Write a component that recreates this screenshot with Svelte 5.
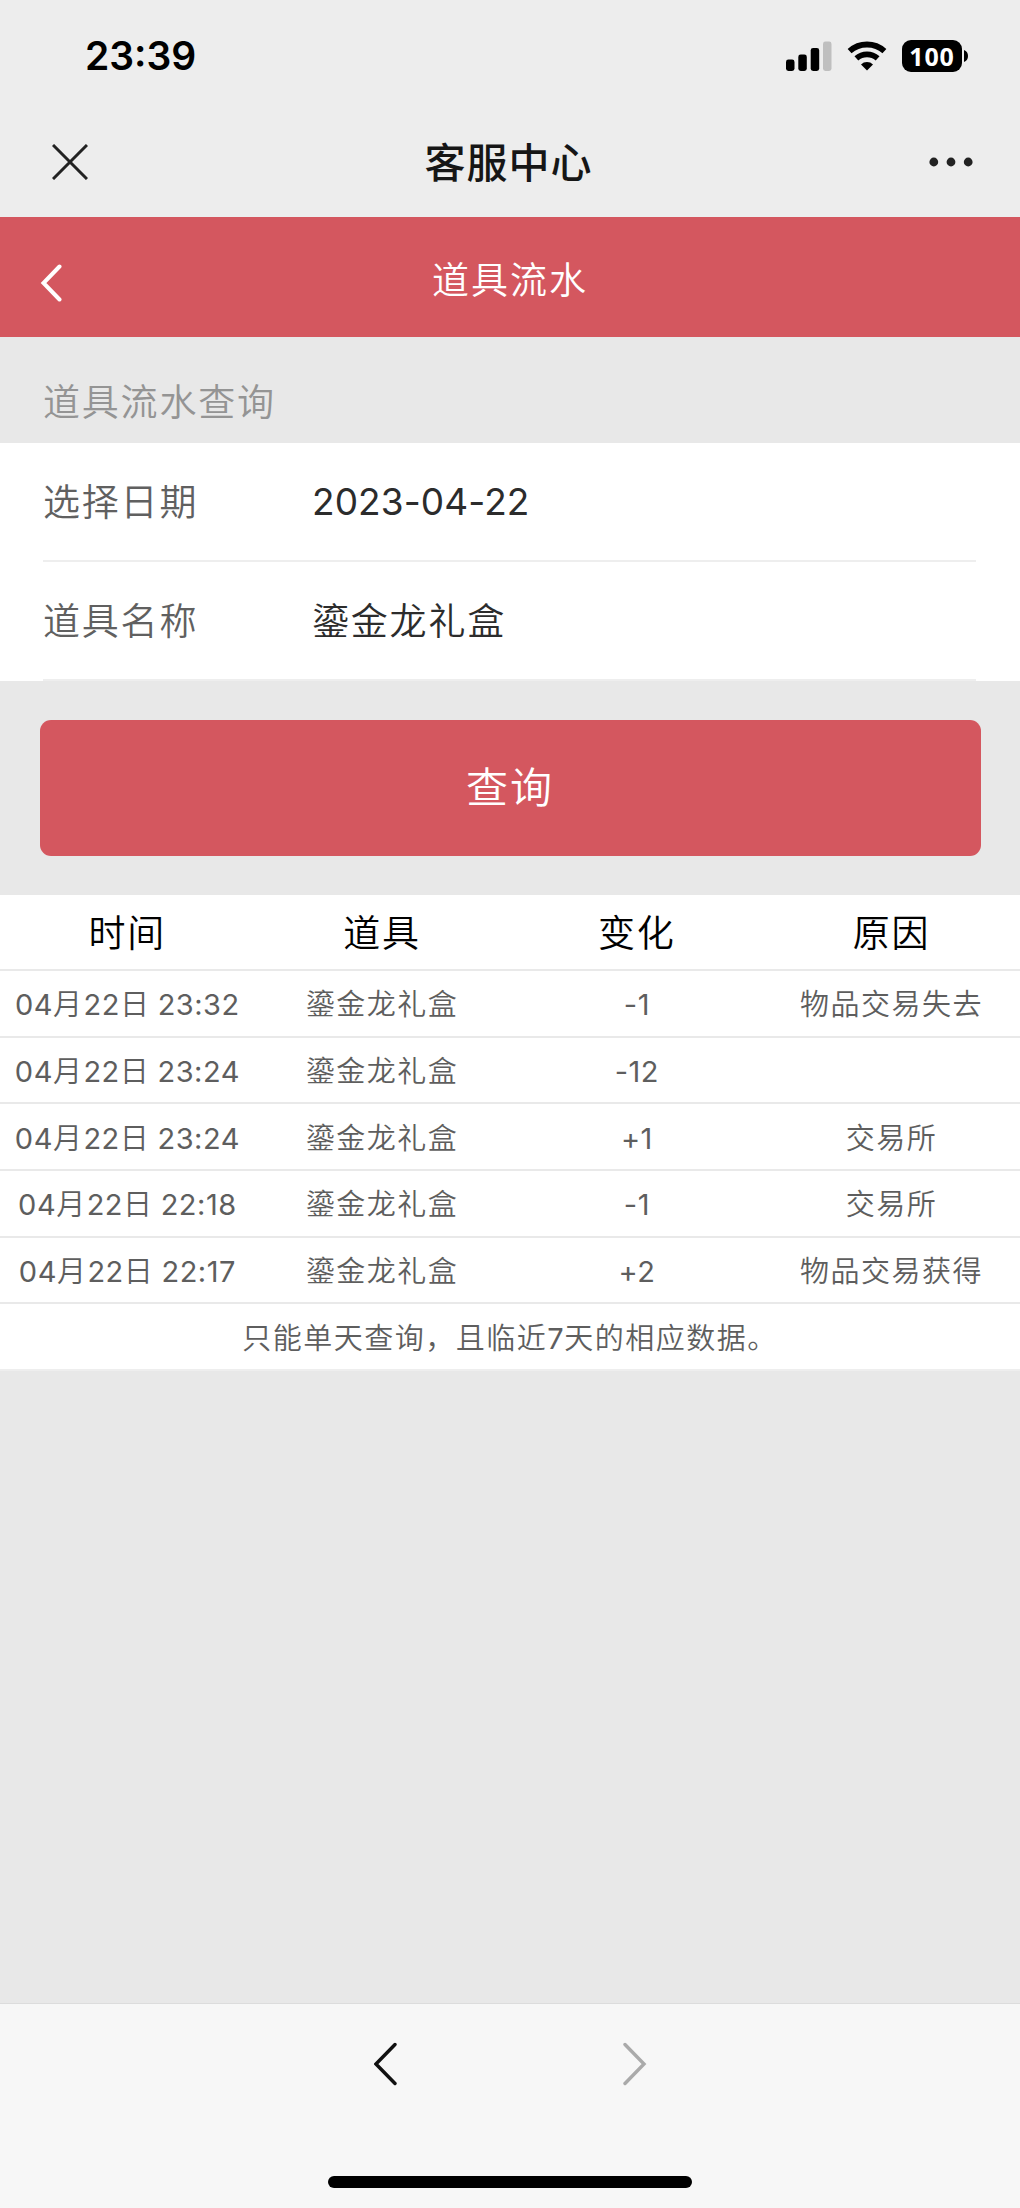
<script>
  const columns = ['时间', '道具', '变化', '原因'];
  const records = [
    ['04月22日 23:32', '鎏金龙礼盒', '-1', '物品交易失去'],
    ['04月22日 23:24', '鎏金龙礼盒', '-12', ''],
    ['04月22日 23:24', '鎏金龙礼盒', '+1', '交易所'],
    ['04月22日 22:18', '鎏金龙礼盒', '-1', '交易所'],
    ['04月22日 22:17', '鎏金龙礼盒', '+2', '物品交易获得']
  ];
  const fields = [
    { label: '选择日期', value: '2023-04-22', numeric: true },
    { label: '道具名称', value: '鎏金龙礼盒', numeric: false }
  ];

  // Odd entries of the result are the numeric runs.
  const runs = (text) => text.split(/([\d:+\-\s]+)/);
</script>

<div class="screen">
  <header class="status">
    <span class="clock">23:39</span>
    <div class="indicators">
      <svg class="signal" width="46" height="30" viewBox="0 0 46 30">
        <rect x="0" y="18.5" width="8.5" height="11.5" rx="2.4" />
        <rect x="12.3" y="13.5" width="8.5" height="16.5" rx="2.4" />
        <rect x="24.7" y="7" width="8.5" height="23" rx="2.4" />
        <rect class="dim" x="37" y="0.5" width="8.5" height="29.5" rx="2.4" />
      </svg>
      <svg class="wifi" width="40" height="30" viewBox="0 0 40 30">
        <path class="arc" d="M2.6 10.2A26 26 0 0 1 37.4 10.2" />
        <path class="arc" d="M9.4 17.4A16 16 0 0 1 30.6 17.4" />
        <path d="M20 29.6L14 23.4A9 9 0 0 1 26 23.4Z" />
      </svg>
      <div class="battery"><span class="charge">100</span></div>
      <svg class="cap" width="4" height="12" viewBox="0 0 4 12"><path d="M0 0Q4 1.5 4 6T0 12Z" /></svg>
    </div>
  </header>

  <nav class="titlebar">
    <svg width="36" height="36" viewBox="0 0 36 36"><path class="close" d="M1 1L35 35M35 1L1 35" /></svg>
    <h1>客服中心</h1>
    <svg class="more" width="44" height="10" viewBox="0 0 44 10">
      <circle cx="4.8" cy="5" r="4.4" /><circle cx="22" cy="5" r="4.4" /><circle cx="39.2" cy="5" r="4.4" />
    </svg>
  </nav>

  <div class="pagebar">
    <svg width="22" height="38" viewBox="0 0 22 38"><path class="back" d="M19.5 2.5L3.5 19L19.5 35.5" /></svg>
    <h2>道具流水</h2>
  </div>

  <h3>道具流水查询</h3>
  <section class="form">
    {#each fields as field}
      <div class="field">
        <span class="label">{field.label}</span>
        <span class="value" class:numeric={field.numeric}>{field.value}</span>
      </div>
    {/each}
  </section>

  <button>查询</button>

  <section class="table">
    <div class="row head">
      {#each columns as column}<span>{column}</span>{/each}
    </div>
    {#each records as record}
      <div class="row">
        {#each record as cell}
          <span>{#each runs(cell) as run, i}{#if i % 2}<span class="digits">{run}</span>{:else}{run}{/if}{/each}</span>
        {/each}
      </div>
    {/each}
    <p>只能单天查询，且临近<span class="digits">7</span>天的相应数据。</p>
  </section>

  <footer>
    <div class="pager">
      <svg width="24" height="44" viewBox="0 0 24 44"><path class="prev" d="M21 2.5L2 22L21 41.5" /></svg>
      <svg width="24" height="44" viewBox="0 0 24 44"><path class="next" d="M2 2.5L21 22L2 41.5" /></svg>
    </div>
    <div class="home"></div>
  </footer>
</div>

<style>
  :global(body) { background: #e8e8e8; }
  * { box-sizing: border-box; }
  .screen {
    width: 1020px;
    height: 2208px;
    display: flex;
    flex-direction: column;
    overflow: hidden;
    background: #e8e8e8;
    font-family: Inter, "Noto Sans CJK SC", sans-serif;
    font-weight: 350;
  }
  svg { display: block; }
  h1, h2, h3, p { margin: 0; }

  .status {
    height: 112px;
    flex: none;
    background: #ededed;
    display: flex;
    justify-content: space-between;
    padding: 0 52px 0 85px;
  }
  .clock { font-size: 39px; font-weight: 600; line-height: 48px; padding-top: 32px; }
  .indicators { display: flex; align-items: center; height: 111px; }
  .signal .dim { fill: #bfbfbf; }
  .wifi { margin-left: 15px; }
  .arc { fill: none; stroke: #000; stroke-width: 5.8; }
  .battery {
    width: 60px;
    height: 32px;
    margin-left: 15px;
    border-radius: 9px;
    background: #000;
    display: flex;
    align-items: center;
    justify-content: center;
  }
  .charge {
    color: #fff;
    font-family: "Noto Sans", "Open Sans", sans-serif;
    font-size: 25px;
    font-weight: 700;
    letter-spacing: 0.8px;
    line-height: 32px;
  }
  .cap { margin-left: 2px; }

  .titlebar {
    height: 105px;
    flex: none;
    background: #ededed;
    display: grid;
    grid-template-columns: 44px 1fr 44px;
    align-items: center;
    padding: 0 47px 5px 52px;
  }
  .close { stroke: #222; stroke-width: 3; }
  h1 {
    padding: 2px 8px 0 0;
    font-size: 41px;
    font-weight: 500;
    letter-spacing: 1px;
    line-height: 60px;
    text-align: center;
    color: #161616;
  }
  .more { fill: #222; }

  .pagebar {
    height: 120px;
    flex: none;
    background: #d4575f;
    display: grid;
    grid-template-columns: 60px 1fr 60px;
    align-items: center;
    padding: 0 40px;
    color: #fff;
  }
  .pagebar svg { margin-top: 12px; }
  .back { fill: none; stroke: #fff; stroke-width: 4; stroke-linecap: round; }
  h2 {
    padding-top: 7px;
    font-size: 37px;
    font-weight: 350;
    letter-spacing: 2px;
    line-height: 56px;
    text-align: center;
  }

  h3 {
    flex: none;
    height: 106px;
    padding: 38px 43px 0;
    font-size: 37px;
    font-weight: 350;
    letter-spacing: 1.8px;
    line-height: 56px;
    color: #949494;
  }

  .form { flex: none; height: 238px; background: #fff; padding: 0 44px 0 43px; }
  .field {
    height: 119px;
    padding-top: 2px;
    border-bottom: 2px solid #eee;
    display: flex;
    align-items: center;
    font-size: 37px;
    letter-spacing: 1.8px;
    line-height: 56px;
  }
  .label { width: 269px; color: #606060; }
  .value { color: #2c2c2c; }
  .numeric { padding-bottom: 2px; font-weight: 400; letter-spacing: 0.1px; }

  button {
    flex: none;
    width: 941px;
    height: 136px;
    margin: 39px auto;
    padding: 0 0 8px;
    border: 0;
    border-radius: 11px;
    background: #d4575f;
    color: #fff;
    font: inherit;
    font-size: 42px;
    letter-spacing: 2px;
  }

  .table { flex: none; background: #fff; }
  .row {
    height: 66.7px;
    padding: 4px 1px 0 0;
    border-bottom: 2px solid #e9e9e9;
    display: grid;
    grid-template-columns: repeat(4, 1fr);
    align-items: center;
    text-align: center;
    font-size: 29px;
    letter-spacing: 1.5px;
    line-height: 44px;
    color: #5e5e5e;
    white-space: nowrap;
  }
  .digits { font-weight: 400; letter-spacing: 0.5px; word-spacing: -1.5px; }
  .head { height: 76px; font-size: 37px; letter-spacing: 2px; line-height: 56px; color: #000; }
  p {
    height: 67px;
    padding-top: 4px;
    border-bottom: 2px solid #eee;
    text-align: center;
    font-size: 29px;
    letter-spacing: 1.5px;
    line-height: 62px;
    color: #5e5e5e;
  }

  footer {
    flex: none;
    height: 205px;
    margin-top: auto;
    border-top: 1px solid #dcdcdc;
    background: #f7f7f7;
    display: flex;
    flex-direction: column;
    align-items: center;
    justify-content: space-between;
    padding: 38px 0 20px;
  }
  .pager { display: flex; justify-content: space-between; width: 273px; }
  .prev, .next { fill: none; stroke: #111; stroke-width: 3.4; stroke-linecap: round; }
  .next { stroke: #aaa; }
  .home { width: 364px; height: 12px; border-radius: 6px; background: #000; }
</style>
